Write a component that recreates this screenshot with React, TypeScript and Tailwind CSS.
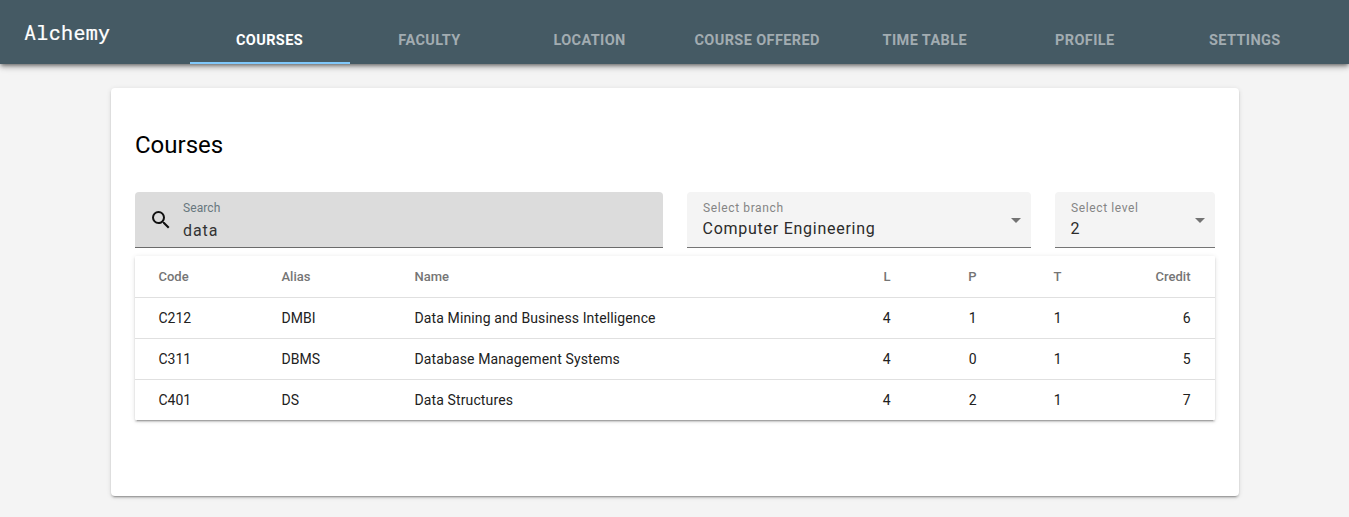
import React from "react";

const tabs = ["Courses", "Faculty", "Location", "Course Offered", "Time Table", "Profile", "Settings"];

const courses = [
  { code: "C212", alias: "DMBI", name: "Data Mining and Business Intelligence", l: 4, p: 1, t: 1, credit: 6 },
  { code: "C311", alias: "DBMS", name: "Database Management Systems", l: 4, p: 0, t: 1, credit: 5 },
  { code: "C401", alias: "DS", name: "Data Structures", l: 4, p: 2, t: 1, credit: 7 },
];

const raised =
  "shadow-[0_3px_1px_-2px_rgba(0,0,0,0.2),0_2px_2px_0_rgba(0,0,0,0.14),0_1px_5px_0_rgba(0,0,0,0.12)]";
const columns = "grid grid-cols-[123px_133px_400px_76px_86px_85px_129px] items-center pl-[23.5px]";

function NavBar() {
  return (
    <header className="flex h-16 bg-[#455a64] shadow-[0_2px_4px_-1px_rgba(0,0,0,0.5),0_4px_5px_0_rgba(0,0,0,0.14),0_1px_10px_0_rgba(0,0,0,0.12)]">
      <div className="w-[190px] pt-4 pl-6 font-['Roboto_Mono','Liberation_Mono',monospace] text-[20px] leading-8 tracking-[0.35px] text-white [-webkit-text-stroke:0.2px_white]">
        Alchemy
      </div>
      <nav className="flex">
        {tabs.map((tab, i) => (
          <button
            key={tab}
            className={
              "flex min-w-40 items-end justify-center whitespace-nowrap border-b-2 pr-[25.5px] pl-[24.5px] pb-[9px] text-[14.5px] leading-6 font-bold tracking-[0.38px] uppercase " +
              (i === 0 ? "border-[#80c8fb] text-white" : "border-transparent text-[#a2acb1]")
            }
          >
            {tab}
          </button>
        ))}
      </nav>
    </header>
  );
}

function SelectField({ label, value, width }: { label: string; value: string; width: string }) {
  return (
    <div className={"flex h-14 items-center justify-between rounded-t border-b border-[#757575] bg-[#f4f4f4] pr-[10px] pl-[15.5px] " + width}>
      <div className="pt-px">
        <div className="pl-[0.5px] text-[12px] leading-[18px] tracking-[0.62px] text-[#858585]">{label}</div>
        <div className="text-[16px] leading-6 tracking-[0.74px] text-[#2b2b2b]">{value}</div>
      </div>
      <svg className="mt-px" width="10" height="5" viewBox="0 0 10 5">
        <path d="M0 0h10L5 5z" fill="#737373" />
      </svg>
    </div>
  );
}

function Filters() {
  return (
    <div className="flex gap-6">
      <label className="flex h-14 w-[528px] rounded-t border-b border-[#6b6b6b] bg-[#dcdcdc] pl-[14px]">
        <svg className="mt-4 mr-[10px] shrink-0" width="24" height="24" viewBox="0 0 24 24" fill="#111">
          <path d="M15.5 14h-.79l-.28-.27A6.471 6.471 0 0 0 16 9.5 6.5 6.5 0 1 0 9.5 16c1.61 0 3.09-.59 4.23-1.57l.27.28v.79l5 4.99L20.49 19l-4.99-5zm-6 0C7.01 14 5 11.99 5 9.5S7.01 5 9.5 5 14 7.01 14 9.5 11.99 14 9.5 14z" />
        </svg>
        <span className="pt-[7px]">
          <span className="block text-[12px] leading-[18px] tracking-[0.1px] text-[#68777e]">Search</span>
          <span className="mt-[2px] block text-[16px] leading-6 tracking-[0.9px] text-[#333]">data</span>
        </span>
      </label>
      <SelectField label="Select branch" value="Computer Engineering" width="w-[344px]" />
      <SelectField label="Select level" value="2" width="w-40" />
    </div>
  );
}

function CourseTable() {
  return (
    <div className={"mt-2 rounded-[1px] bg-white " + raised}>
      <div className={columns + " h-[41px] text-[13px] font-medium text-[#757575]"}>
        <span>Code</span>
        <span>Alias</span>
        <span>Name</span>
        <span className="text-right">L</span>
        <span className="text-right">P</span>
        <span className="text-right">T</span>
        <span className="text-right">Credit</span>
      </div>
      {courses.map((c) => (
        <div key={c.code} className={columns + " h-[41px] border-t border-[#e0e0e0] text-[14px] text-[#212121]"}>
          <span>{c.code}</span>
          <span>{c.alias}</span>
          <span className="tracking-[0.12px]">{c.name}</span>
          <span className="text-right">{c.l}</span>
          <span className="text-right">{c.p}</span>
          <span className="text-right">{c.t}</span>
          <span className="text-right">{c.credit}</span>
        </div>
      ))}
    </div>
  );
}

export default function App() {
  return (
    <div className="h-[517px] bg-[#f4f4f4] font-[Roboto,sans-serif]">
      <NavBar />
      <main className={"mt-6 ml-[111px] h-[408px] w-[1128px] rounded-sm bg-white px-6 pt-[41px] " + raised}>
        <h1 className="mb-[31px] text-[24px] leading-8 text-black">Courses</h1>
        <Filters />
        <CourseTable />
      </main>
    </div>
  );
}
